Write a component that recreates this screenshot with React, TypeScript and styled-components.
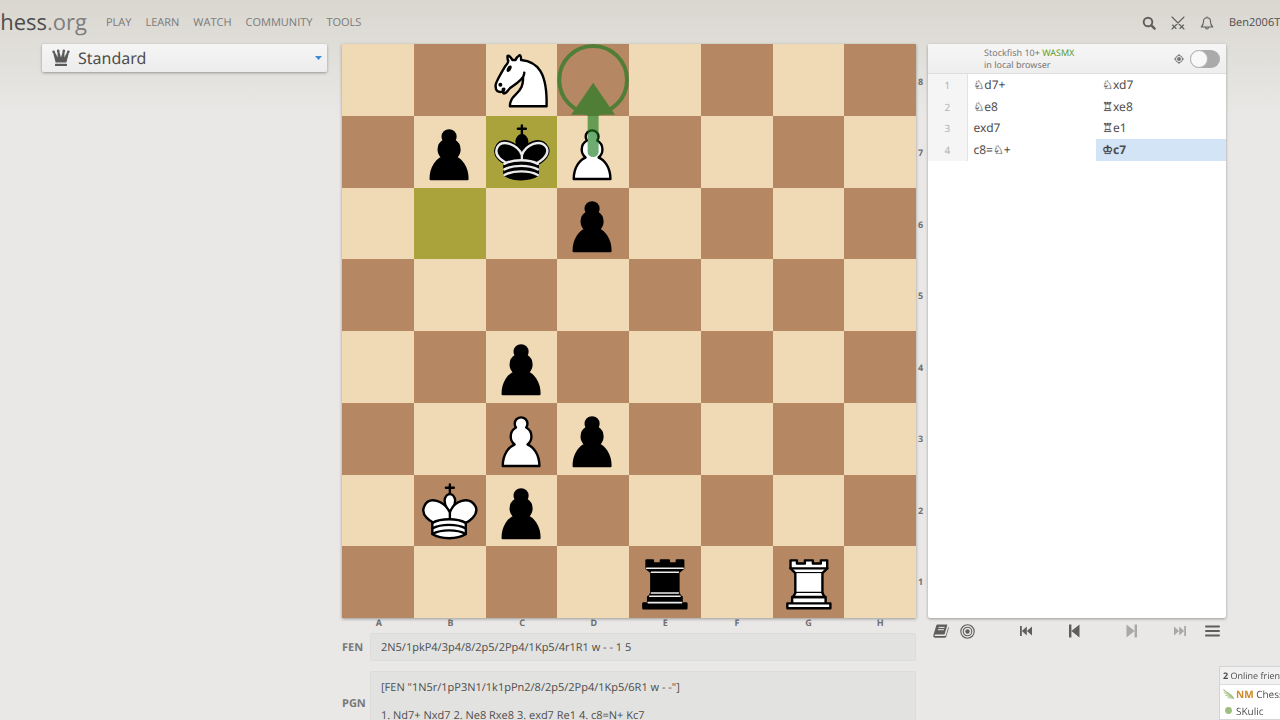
import React from "react";
import styled, { createGlobalStyle, css } from "styled-components";

const GlobalStyle = createGlobalStyle`
  *, *::before, *::after { box-sizing: border-box; }
  body {
    margin: 0;
    background: #e9e8e6;
    color: #4d4d4d;
    font-family: "Noto Sans", sans-serif;
    font-size: 12px;
    text-rendering: geometricPrecision;
  }
  button, input, select, textarea { font: inherit; color: inherit; text-rendering: inherit; }
`;

const Page = styled.div`
  height: 100vh;
  overflow: hidden;
  background: linear-gradient(to bottom, #dad7d0, #e9e8e6 116px);
`;

/* ---------- header ---------- */

const Header = styled.header`
  display: flex;
  align-items: center;
  height: 44px;
  white-space: nowrap;
`;

const Logo = styled.a`
  display: flex;
  justify-content: flex-end;
  flex: none;
  width: 87px;
  font-family: "Open Sans", sans-serif;
  font-size: 22px;
  line-height: 32px;
  color: #4d4d4d;
  text-decoration: none;
  span { color: #7d7d7d; }
`;

const Nav = styled.nav`
  display: flex;
  gap: 14px;
  margin-left: 19px;
  padding-top: 2px;
  flex: 1;
`;

const NavLink = styled.a`
  font-family: "Open Sans", sans-serif;
  font-size: 11px;
  line-height: 16px;
  color: #787878;
  text-decoration: none;
`;

const HeaderTools = styled.div`
  display: flex;
  align-items: center;
  gap: 15px;
  padding-top: 2px;
`;

const IconButton = styled.button<{ $dim?: boolean }>`
  display: inline-flex;
  align-items: center;
  justify-content: center;
  padding: 0;
  border: 0;
  background: none;
  color: ${(p) => (p.$dim ? "#a8a8a8" : "#5e5e5e")};
  svg { display: block; }
`;

const UserLink = styled.a`
  width: 51px;
  font-family: "Open Sans", sans-serif;
  font-size: 11px;
  line-height: 16px;
  color: #4d4d4d;
  text-decoration: none;
`;

/* ---------- main layout ---------- */

const Main = styled.main`
  display: grid;
  grid-template-columns: 288px minmax(0, 1fr) 298px;
  column-gap: 12px;
  padding: 0 54px 0 42px;
`;

const panelShadow = css`
  box-shadow: 0 1px 3px rgba(0, 0, 0, 0.35);
`;

const VariantPicker = styled.label`
  position: relative;
  display: block;
  align-self: start;
  height: 28px;
  margin-right: 3px;
  border-radius: 2px;
  background: linear-gradient(to bottom, #f5f5f5, #ececec);
  ${panelShadow}
`;

const VariantSelect = styled.select`
  display: block;
  width: 100%;
  height: 28px;
  padding: 0 24px 0 36px;
  border: 0;
  background: none;
  appearance: none;
  font-size: 16px;
  line-height: 28px;
`;

const PickerMark = styled.span<{ $side: "left" | "right" }>`
  position: absolute;
  top: 0;
  bottom: 0;
  ${(p) => (p.$side === "left" ? "left: 10px;" : "right: 5px;")}
  display: flex;
  align-items: center;
  pointer-events: none;
`;

const BoardArea = styled.div`
  display: grid;
  grid-template-columns: minmax(0, 1fr) 12px;
  margin-right: -12px;
`;

const Board = styled.div`
  position: relative;
  display: grid;
  grid-template-columns: repeat(8, 1fr);
  grid-template-rows: repeat(8, 1fr);
  aspect-ratio: 1;
  ${panelShadow}
`;

const Square = styled.div<{ $dark: boolean; $last: boolean }>`
  min-width: 0;
  min-height: 0;
  background: ${(p) => (p.$last ? "#aaa23a" : p.$dark ? "#b58863" : "#f0d9b5")};
  svg { display: block; width: 100%; height: 100%; }
`;

const Shapes = styled.svg`
  position: absolute;
  inset: 0;
  width: 100%;
  height: 100%;
  pointer-events: none;
`;

const coordText = css`
  font-size: 9px;
  font-weight: 700;
  line-height: 10px;
  color: #707070;
`;

const Ranks = styled.div`
  display: grid;
  grid-template-rows: repeat(8, 1fr);
  align-items: center;
  padding: 2px 0 0 2px;
  ${coordText}
`;

const Files = styled.div`
  display: grid;
  grid-template-columns: repeat(8, 1fr);
  height: 10px;
  text-align: center;
  padding-left: 1px;
  ${coordText}
`;

/* ---------- analysis panel ---------- */

const Panel = styled.section`
  grid-column: 3;
  grid-row: 1;
  margin-bottom: 10px;
  background: #fff;
  border-radius: 2px;
  overflow: hidden;
  ${panelShadow}
`;

const Engine = styled.div`
  display: flex;
  align-items: center;
  gap: 6px;
  height: 30px;
  padding: 0 6px 0 56px;
  border-bottom: 1px solid #dedede;
  background: linear-gradient(to bottom, #f6f6f6, #eeeeee);
`;

const EngineName = styled.div`
  flex: 1;
  font-size: 9px;
  line-height: 12px;
  color: #787878;
  span { color: #629924; }
`;

const Toggle = styled.input`
  appearance: none;
  position: relative;
  width: 30px;
  height: 18px;
  margin: 0;
  border-radius: 9px;
  background: #aaa;
  &::before {
    content: "";
    position: absolute;
    left: 0;
    top: 0;
    width: 18px;
    height: 18px;
    border: 1px solid #b5b5b5;
    border-radius: 50%;
    background: #f8f8f8;
  }
  &:checked { background: #629924; }
  &:checked::before { left: 12px; }
`;

const Moves = styled.table`
  width: 100%;
  height: 87px;
  border-collapse: collapse;
  table-layout: fixed;
  font-size: 12px;
  line-height: 20px;
  col:first-child { width: 39px; }
`;

const MoveIndex = styled.th`
  padding: 0;
  font-size: 10px;
  font-weight: 400;
  color: #b3b3b3;
  background: #f5f5f5;
  border-right: 1px solid #e2e2e2;
`;

const Move = styled.td<{ $active?: boolean }>`
  padding: 0 6px;
  color: #4d4d4d;
  ${(p) => p.$active && css`background: #d3e4f7; font-weight: 700;`}
`;

const Figurine = styled.span`
  font-family: "DejaVu Sans", sans-serif;
  font-size: 12px;
  line-height: 16px;
  color: #333;
  text-shadow: 0 0 1px currentColor;
`;

/* ---------- below the board ---------- */

const Under = styled.div`
  grid-column: 2;
  grid-row: 2;
  display: grid;
  gap: 10px;
  padding-top: 5px;
`;

const Field = styled.label`
  display: grid;
  grid-template-columns: 28px minmax(0, 1fr);
  align-items: center;
  font-family: "Open Sans", sans-serif;
  font-size: 11px;
  span { font-weight: 700; color: #787878; }
`;

const fieldBox = css`
  display: block;
  width: 100%;
  border: 1px solid #dcdcda;
  border-radius: 2px;
  background: #e2e2e0;
  color: #4d4d4d;
  outline: none;
`;

const FenInput = styled.input`
  ${fieldBox}
  height: 28px;
  padding: 0 10px;
`;

const PgnText = styled.textarea`
  ${fieldBox}
  height: 64px;
  padding: 9px 10px;
  line-height: 14px;
  resize: none;
  overflow: hidden;
`;

const Controls = styled.div`
  grid-column: 3;
  grid-row: 2;
  display: flex;
  align-items: center;
  align-self: start;
  height: 26px;
  margin-top: -10px;
  padding: 0 6px 0 5px;
`;

const ToolGroup = styled.div`
  display: flex;
  align-items: center;
  gap: 11px;
`;

const JumpGroup = styled.div`
  display: flex;
  flex: 1;
  justify-content: space-between;
  padding: 0 19px 0 45px;
`;

const JumpPair = styled.div`
  display: flex;
  align-items: center;
  gap: 36px;
`;

/* ---------- online friends ---------- */

const Friends = styled.aside`
  position: fixed;
  right: 0;
  bottom: 0;
  width: 61px;
  white-space: nowrap;
  background: #fff;
  border: 1px solid #d4d4d4;
  border-right: 0;
  font-family: "Open Sans", sans-serif;
  font-size: 10px;
`;

const FriendsTitle = styled.div`
  height: 18px;
  padding-left: 3px;
  font-size: 9px;
  line-height: 17px;
  background: #f1f1f1;
  border-bottom: 1px solid #dcdcdc;
`;

const Friend = styled.a`
  display: flex;
  align-items: center;
  gap: 1px;
  height: 17px;
  padding-left: 2px;
  color: #4d4d4d;
  text-decoration: none;
  svg { flex: none; }
  b { color: #cf8a2a; }
`;

/* ---------- pieces ---------- */

const PAWN =
  "M22 9c-2.21 0-4 1.79-4 4 0 .89.29 1.71.78 2.38-1.95 1.12-3.28 3.21-3.28 5.62 0 2.03.94 3.84 2.41 5.03-3 1.06-7.41 5.55-7.41 13.47h23c0-7.92-4.41-12.41-7.41-13.47 1.47-1.19 2.41-3 2.41-5.03 0-2.41-1.33-4.5-3.28-5.62.49-.67.78-1.49.78-2.38 0-2.21-1.79-4-4-4z";
const KING_TOP = "M22.5 25s4.5-7.5 3-10.5c0 0-1-2.5-3-2.5s-3 2.5-3 2.5c-1.5 3 3 10.5 3 10.5";
const KING_BODY =
  "M11.5 37c5.5 3.5 15.5 3.5 21 0v-7s9-4.5 6-10.5c-4-6.5-13.5-3.5-16 4V27v-3.5c-3.5-7.5-13-10.5-16-4-3 6 5 10 5 10V37z";
const KING_BANDS = "M11.5 30c5.5-3 15.5-3 21 0m-21 3.5c5.5-3 15.5-3 21 0m-21 3.5c5.5-3 15.5-3 21 0";

const Piece = ({ code }: { code: string }) => {
  const white = code === code.toUpperCase();
  const fill = white ? "#fff" : "#000";
  return (
    <svg viewBox="0 0 45 45" fill={fill} stroke="#000" strokeWidth="1.5" strokeLinecap="round" strokeLinejoin="round" aria-hidden="true">
      {code.toLowerCase() === "p" && <path d={PAWN} />}
      {code.toLowerCase() === "k" && (
        <>
          <path d="M22.5 11.63V6M20 8h5" />
          <path d={KING_TOP} strokeLinecap="butt" strokeLinejoin="miter" />
          <path d={KING_BODY} />
          {!white && (
            <path
              d="M32 29.5s8.5-4 6.03-9.65C34.15 14 25 18 22.5 24.5l.01 2.1-.01-2.1C20 18 9.906 14 6.997 19.85c-2.497 5.65 4.853 9 4.853 9"
              stroke="#ececec"
            />
          )}
          <path d={KING_BANDS} fill="none" stroke={white ? "#000" : "#ececec"} />
        </>
      )}
      {code === "N" && (
        <>
          <path d="M22 10c10.5 1 16.5 8 16 29H15c0-9 10-6.5 8-21" />
          <path d="M24 18c.38 2.91-5.55 7.37-8 9-3 2-2.82 4.34-5 4-1.042-.94 1.41-3.04 0-3-1 0 .19 1.23-1 2-1 0-4.003 1-4-4 0-2 6-12 6-12s1.89-1.9 2-3.5c-.73-.994-.5-2-.5-3 1-1 3 2.5 3 2.5h2s.78-1.992 2.5-3c1 0 1 3 1 3" />
          <path d="M9.5 25.5a.5.5 0 1 1-1 0 .5.5 0 1 1 1 0zm5.433-9.75a.5 1.5 30 1 1-.866-.5.5 1.5 30 1 1 .866.5z" fill="#000" />
        </>
      )}
      {code === "R" && (
        <>
          <path d="M9 39h27v-3H9v3zm3-3v-4h21v4H12zm-1-22V9h4v2h5V9h5v2h5V9h4v5" strokeLinecap="butt" />
          <path d="M34 14l-3 3H14l-3-3" />
          <path d="M31 17v12.5H14V17" strokeLinecap="butt" strokeLinejoin="miter" />
          <path d="M31 29.5l1.5 2.5h-20l1.5-2.5" />
          <path d="M11 14h23" fill="none" strokeLinejoin="miter" />
        </>
      )}
      {code === "r" && (
        <>
          <path d="M9 39h27v-3H9v3zm3.5-7l1.5-2.5h17l1.5 2.5h-20zm-.5 4v-4h21v4H12z" strokeLinecap="butt" />
          <path d="M14 29.5v-13h17v13H14z" strokeLinecap="butt" strokeLinejoin="miter" />
          <path d="M14 16.5L11 14h23l-3 2.5H14zM11 14V9h4v2h5V9h5v2h5V9h4v5H11z" strokeLinecap="butt" />
          <path d="M12 35.5h21m-20-4h19m-18-2h17m-17-13h17M11 14h23" fill="none" stroke="#ececec" strokeWidth="1" strokeLinejoin="miter" />
        </>
      )}
    </svg>
  );
};

/* ---------- icons ---------- */

const CrownIcon = () => (
  <svg width="18" height="18" viewBox="0 0 18 18" fill="#5a5a5a" aria-hidden="true">
    <path d="M3.6 13.6 1 3.200l1.500-.6 3.300 6L5.300 2h1.800L9 8.500 10.900 2h1.800l-.5 6.600 3.300-6 1.500.6-2.600 10.400z" />
    <circle cx="1.6" cy="2.800" r="1.300" />
    <circle cx="6.200" cy="1.900" r="1.300" />
    <circle cx="11.800" cy="1.900" r="1.300" />
    <circle cx="16.4" cy="2.800" r="1.300" />
    <rect x="3" y="14.8" width="12" height="2.300" rx=".6" />
  </svg>
);

const CaretIcon = () => (
  <svg width="7" height="4" viewBox="0 0 7 4" aria-hidden="true">
    <path d="M0 0h7L3.500 4z" fill="#3d8bd6" />
  </svg>
);

const SearchIcon = () => (
  <svg width="14" height="14" viewBox="0 0 14 14" fill="none" stroke="currentColor" aria-hidden="true">
    <circle cx="6" cy="6" r="4.300" strokeWidth="1.900" />
    <path d="m9.400 9.400 3.200 3.200" strokeWidth="2.400" strokeLinecap="round" />
  </svg>
);

const SwordsIcon = () => (
  <svg width="14" height="14" viewBox="0 0 14 14" fill="none" stroke="currentColor" strokeWidth="1.100" strokeLinecap="round" aria-hidden="true">
    <path d="M1 1l11 11M13 1 2 12M1.500 9l3.500 3.500M12.500 9 9 12.500M1 13l1.500-1.500M13 13l-1.500-1.500" />
  </svg>
);

const BellIcon = () => (
  <svg width="14" height="14" viewBox="0 0 14 14" fill="none" stroke="currentColor" strokeWidth="1.100" strokeLinejoin="round" aria-hidden="true">
    <path d="M7 1.700c-2.400 0-3.500 1.700-3.500 3.800 0 3-.7 4.200-2.200 5.500h11.400c-1.500-1.300-2.200-2.500-2.200-5.500 0-2.100-1.100-3.800-3.500-3.800zM7 .5v1.200M5.600 11.200c0 2.400 2.800 2.400 2.800 0" />
  </svg>
);

const AimIcon = () => (
  <svg width="10" height="10" viewBox="0 0 10 10" fill="none" stroke="#777" aria-hidden="true">
    <circle cx="5" cy="5" r="3.500" />
    <circle cx="5" cy="5" r="2" fill="#777" stroke="none" />
    <path d="M5 0v2M5 8v2M0 5h2M8 5h2" />
  </svg>
);

const BookIcon = () => (
  <svg width="16" height="14" viewBox="0 0 16 14" fill="none" aria-hidden="true">
    <path d="M4.800.5h8.600c.7 0 1 .5.800 1.100L11.500 10.500H2.500c-1.300 0-1.300 1.500 0 1.500h9.400c.5 0 .8-.3 1-.8l2.400-8.300c.5.400.6.800.4 1.400L13.300 12.400c-.3.900-.9 1.300-1.700 1.300H2.300C.7 13.700 0 12.200.4 10.900L3.200 1.800C3.500.9 4 .5 4.800.5z" fill="currentColor" />
    <path d="M5.600 3.400h6M4.900 5.700h6" stroke="#e9e8e6" strokeWidth="1" />
  </svg>
);

const TargetIcon = () => (
  <svg width="15" height="15" viewBox="0 0 15 15" fill="none" stroke="currentColor" aria-hidden="true">
    <circle cx="7.500" cy="7.500" r="6.700" strokeWidth="1.100" />
    <circle cx="7.500" cy="7.500" r="4.300" strokeWidth="1.100" />
    <circle cx="7.500" cy="7.500" r="2.200" fill="currentColor" stroke="none" />
  </svg>
);

const SkipIcon = ({ double, forward }: { double?: boolean; forward?: boolean }) => (
  <svg width="12" height="14" viewBox="0 0 12 14" fill="currentColor" aria-hidden="true">
    <g transform={forward ? "matrix(-1 0 0 1 12 0)" : undefined}>
      {double ? <path d="M0 2h1.800v10H0zM6.800 2.500v9L1.900 7zM12 2.500v9L6.900 7z" /> : <path d="M1 .5h2.400v13H1zM11.500.5v13L3.400 7z" />}
    </g>
  </svg>
);

const MenuIcon = () => (
  <svg width="15" height="12" viewBox="0 0 15 12" stroke="currentColor" strokeWidth="2" strokeLinecap="round" aria-hidden="true">
    <path d="M1 1.500h13M1 6h13M1 10.500h13" />
  </svg>
);

const WingIcon = () => (
  <svg width="13" height="10" viewBox="0 0 13 10" fill="none" stroke="#a0bd80" strokeLinecap="round" aria-hidden="true">
    <path d="M1.800.800C3.500 3.800 8 3.600 11.500 9.200" strokeWidth="1.200" />
    <path d="M2 3.600C4 5.200 7 5.300 11 8.800M3.800 6.300c2 .9 4 .6 7.300 2.800M6 8.700c1.500.5 3 .2 5.500.4" strokeWidth=".9" />
  </svg>
);

const DotIcon = () => (
  <svg width="13" height="10" viewBox="0 0 13 10" aria-hidden="true">
    <circle cx="6.500" cy="4.500" r="3.400" fill="#a0bd80" />
  </svg>
);

/* ---------- data ---------- */

const POSITION = "2N5/1pkP4/3p4/8/2p5/2Pp4/1Kp5/4r1R1";
const LAST_MOVE = [10, 17];
const squares = POSITION.replace(/\//g, "")
  .replace(/\d/g, (n) => ".".repeat(Number(n)))
  .split("");

const moves = [
  ["♘d7+", "♘xd7"],
  ["♘e8", "♖xe8"],
  ["exd7", "♖e1"],
  ["c8=♘+", "♔c7"],
];

const PGN = `[FEN "1N5r/1pP3N1/1k1pPn2/8/2p5/2Pp4/1Kp5/6R1 w - -"]

1. Nd7+ Nxd7 2. Ne8 Rxe8 3. exd7 Re1 4. c8=N+ Kc7`;

const San = ({ text }: { text: string }) => (
  <>
    {text.split(/([♔♖♘])/).map((part, i) => (i % 2 ? <Figurine key={i}>{part}</Figurine> : part))}
  </>
);

export default function App() {
  return (
    <Page>
      <GlobalStyle />
      <Header>
        <Logo href="#">hess<span>.org</span></Logo>
        <Nav>
          {["PLAY", "LEARN", "WATCH", "COMMUNITY", "TOOLS"].map((name) => (
            <NavLink href="#" key={name}>{name}</NavLink>
          ))}
        </Nav>
        <HeaderTools>
          <IconButton aria-label="Search"><SearchIcon /></IconButton>
          <IconButton aria-label="Challenges"><SwordsIcon /></IconButton>
          <IconButton aria-label="Notifications"><BellIcon /></IconButton>
          <UserLink href="#">Ben2006T</UserLink>
        </HeaderTools>
      </Header>

      <Main>
        <VariantPicker>
          <PickerMark $side="left"><CrownIcon /></PickerMark>
          <VariantSelect aria-label="Variant" defaultValue="Standard">
            <option>Standard</option>
          </VariantSelect>
          <PickerMark $side="right"><CaretIcon /></PickerMark>
        </VariantPicker>

        <BoardArea>
          <Board>
            {squares.map((code, i) => (
              <Square key={i} $dark={(i + Math.floor(i / 8)) % 2 === 1} $last={LAST_MOVE.includes(i)}>
                {code !== "." && <Piece code={code} />}
              </Square>
            ))}
            <Shapes viewBox="0 0 576 576" aria-hidden="true">
              <g opacity="0.62" stroke="#15781b">
                <circle cx="252" cy="36" r="34" fill="none" strokeWidth="4" />
                <path d="M252 108V71" strokeWidth="11" strokeLinecap="round" />
                <path d="M230 71h44L252 39z" fill="#15781b" stroke="none" />
              </g>
            </Shapes>
          </Board>
          <Ranks>
            {[8, 7, 6, 5, 4, 3, 2, 1].map((n) => <span key={n}>{n}</span>)}
          </Ranks>
          <Files>
            {"ABCDEFGH".split("").map((c) => <span key={c}>{c}</span>)}
          </Files>
        </BoardArea>

        <Panel>
          <Engine>
            <EngineName>Stockfish 10+ <span>WASMX</span><br />in local browser</EngineName>
            <IconButton aria-label="Show threat"><AimIcon /></IconButton>
            <Toggle type="checkbox" aria-label="Toggle local evaluation" />
          </Engine>
          <Moves>
            <colgroup><col /><col /><col /></colgroup>
            <tbody>
              {moves.map(([white, black], i) => (
                <tr key={i}>
                  <MoveIndex scope="row">{i + 1}</MoveIndex>
                  <Move><San text={white} /></Move>
                  <Move $active={i === moves.length - 1}><San text={black} /></Move>
                </tr>
              ))}
            </tbody>
          </Moves>
        </Panel>

        <Under>
          <Field>
            <span>FEN</span>
            <FenInput readOnly value="2N5/1pkP4/3p4/8/2p5/2Pp4/1Kp5/4r1R1 w - - 1 5" />
          </Field>
          <Field>
            <span>PGN</span>
            <PgnText readOnly value={PGN} />
          </Field>
        </Under>

        <Controls>
          <ToolGroup>
            <IconButton aria-label="Opening explorer"><BookIcon /></IconButton>
            <IconButton aria-label="Practice"><TargetIcon /></IconButton>
          </ToolGroup>
          <JumpGroup>
            <JumpPair>
              <IconButton aria-label="First move"><SkipIcon double /></IconButton>
              <IconButton aria-label="Previous move"><SkipIcon /></IconButton>
            </JumpPair>
            <JumpPair>
              <IconButton $dim aria-label="Next move"><SkipIcon forward /></IconButton>
              <IconButton $dim aria-label="Last move"><SkipIcon double forward /></IconButton>
            </JumpPair>
          </JumpGroup>
          <IconButton aria-label="Menu"><MenuIcon /></IconButton>
        </Controls>
      </Main>

      <Friends>
        <FriendsTitle><strong>2</strong> Online frien</FriendsTitle>
        <Friend href="#"><WingIcon /><span><b>NM</b> Chess</span></Friend>
        <Friend href="#"><DotIcon />SKulic</Friend>
      </Friends>
    </Page>
  );
}
